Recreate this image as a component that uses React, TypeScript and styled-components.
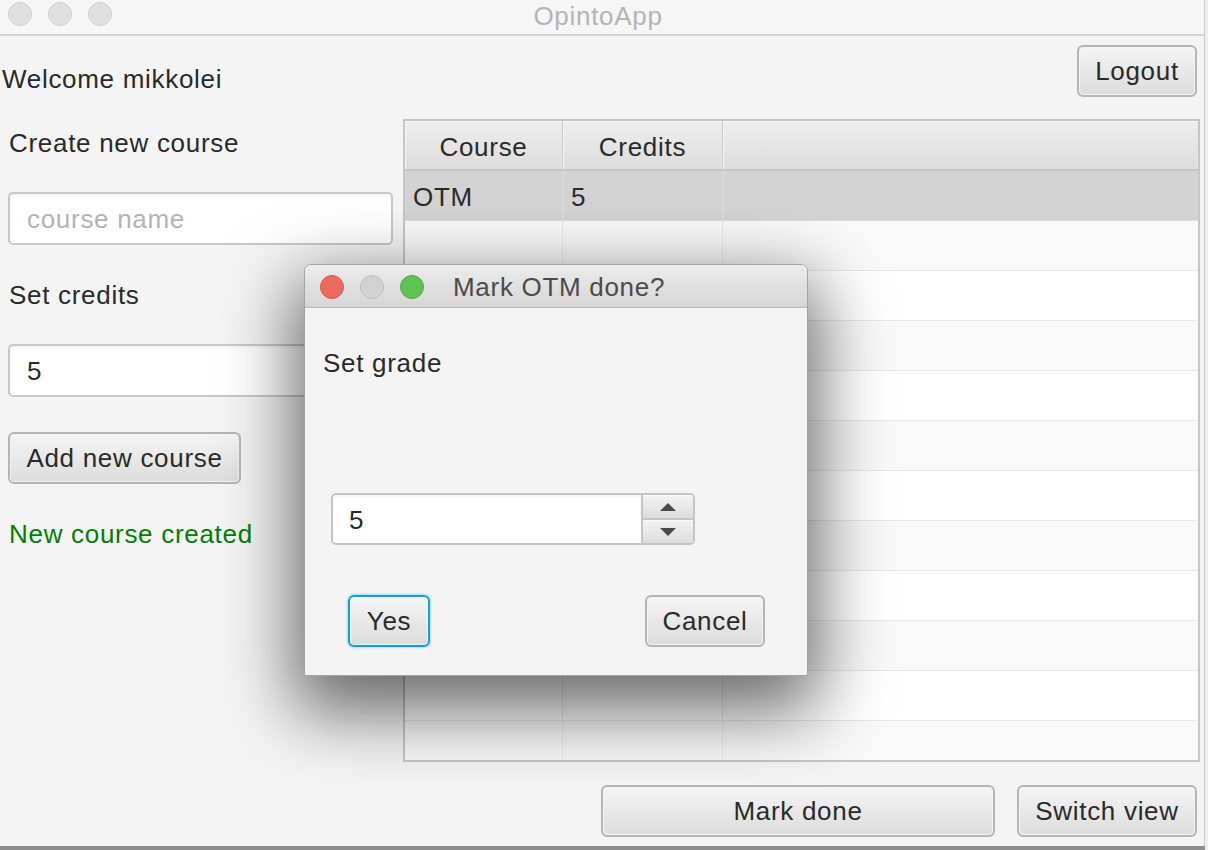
import React from "react";
import styled, { createGlobalStyle } from "styled-components";

const Global = createGlobalStyle`
  html, body { margin: 0; padding: 0; background: #efefef; }
  body { font-family: "Liberation Sans", Arial, sans-serif; }
  #root { width: 1208px; height: 850px; overflow: hidden; }
  * { box-sizing: border-box; }
`;

const Window = styled.div`
  position: relative;
  width: 1205px;
  height: 846px;
  background: #f4f4f4;
  border-right: 1px solid #cbcbcb;
  box-shadow: 0 4px 0 0 #8e8e8e;
  display: flex;
  flex-direction: column;
  font-size: 26px;
  letter-spacing: 0.7px;
  color: #2a2a2a;
`;

const TitleBar = styled.div`
  height: 36px;
  flex: none;
  background: #f6f6f6;
  border-bottom: 2px solid #d6d6d6;
  display: grid;
  grid-template-columns: 1fr auto 1fr;
  align-items: center;
  padding: 0 16px 0 8px;
`;

const Lights = styled.div`
  display: flex;
  gap: 16px;
  align-self: start;
  padding-top: 2px;
`;

const Light = styled.span<{ $c: string; $b: string }>`
  width: 24px;
  height: 24px;
  border-radius: 50%;
  background: ${(p) => p.$c};
  border: 1px solid ${(p) => p.$b};
`;

const WinTitle = styled.div`
  color: #b4b4b4;
  line-height: 30px;
  margin-top: -3px;
`;

const Content = styled.div`
  flex: 1;
  display: flex;
  flex-direction: column;
  padding: 9px 4px 9px 0;
  min-height: 0;
`;

const TopRow = styled.div`
  height: 52px;
  display: flex;
  justify-content: space-between;
  align-items: flex-start;
  padding-right: 3px;
`;

const Welcome = styled.div`
  margin-top: 19px;
  padding-left: 2px;
  line-height: 30px;
`;

const Button = styled.button<{ $w: number; $focus?: boolean }>`
  width: ${(p) => p.$w}px;
  height: 52px;
  flex: none;
  font: inherit;
  letter-spacing: inherit;
  color: #2a2a2a;
  border-radius: 6px;
  border: 2px solid ${(p) => (p.$focus ? "#129ed9" : "#b5b5b5")};
  background: linear-gradient(#f5f5f5, #dcdcdc);
  box-shadow: ${(p) =>
    p.$focus
      ? "0 0 2px 1px #a6dcf3, inset 0 0 0 1px #f4f4f4"
      : "inset 0 0 0 1px #f3f3f3"};
  padding: 1px 0 0;
  display: flex;
  align-items: center;
  justify-content: center;
`;

const MainRow = styled.div`
  margin-top: 22px;
  flex: 1;
  min-height: 0;
  display: flex;
`;

const LeftColumn = styled.div`
  width: 403px;
  flex: none;
  display: flex;
  flex-direction: column;
  align-items: flex-start;
  gap: 34px;
  padding: 9px 0 0 8px;
`;

const Label = styled.div<{ $color?: string }>`
  line-height: 30px;
  padding-left: 1px;
  color: ${(p) => p.$color || "#2a2a2a"};
`;

const Field = styled.input`
  width: 385px;
  height: 53px;
  margin-bottom: 1px;
  border: 2px solid #c8c8c8;
  border-radius: 5px;
  background: #fff;
  box-shadow: inset 0 2px 2px rgba(0, 0, 0, 0.04);
  font: inherit;
  letter-spacing: inherit;
  color: #2a2a2a;
  padding: 2px 0 0 17px;
  outline: none;
  &::placeholder { color: #b3b3b3; }
`;

const LeftButtonWrap = styled.div`
  margin-bottom: 1px;
`;

const Table = styled.div`
  flex: 1;
  border: 2px solid #c6c6c6;
  background: #fff;
  display: flex;
  flex-direction: column;
  overflow: hidden;
`;

const cols = "158px 160px 1fr";

const HeaderRow = styled.div`
  display: grid;
  grid-template-columns: ${cols};
  height: 50px;
  flex: none;
  border-bottom: 2px solid #c6c6c6;
`;

const HeaderCell = styled.div`
  background: linear-gradient(#efefef, #dcdcdc);
  border-right: 1px solid #c6c6c6;
  box-shadow: inset 1px 1px 0 #f7f7f7, inset -1px 0 0 #e8e8e8;
  display: flex;
  align-items: center;
  justify-content: center;
  padding-top: 4px;
  &:last-child { border-right: none; }
`;

const Row = styled.div<{ $bg: string; $line: string }>`
  display: grid;
  grid-template-columns: ${cols};
  height: 50px;
  flex: none;
  background: ${(p) => p.$bg};
  border-bottom: 1px solid ${(p) => p.$line};
`;

const Cell = styled.div<{ $line: string }>`
  border-right: 1px solid ${(p) => p.$line};
  display: flex;
  align-items: center;
  padding: 3px 0 0 8px;
  &:last-child { border-right: none; }
`;

const BottomRow = styled.div`
  margin-top: 23px;
  display: flex;
  justify-content: flex-end;
  gap: 22px;
  padding-right: 3px;
`;

/* Dialog */
const Dialog = styled.div`
  position: absolute;
  left: 304px;
  top: 264px;
  width: 504px;
  height: 412px;
  border: 1px solid #a3a3a3;
  border-radius: 7px 7px 2px 2px;
  background: #f4f4f4;
  box-shadow: 0 26px 70px 10px rgba(0, 0, 0, 0.58);
  display: flex;
  flex-direction: column;
  overflow: hidden;
`;

const DialogBar = styled.div`
  height: 43px;
  flex: none;
  border-bottom: 1px solid #b8b8b8;
  background: linear-gradient(#ececec, #d6d6d6);
  display: flex;
  align-items: center;
  gap: 16px;
  padding: 2px 0 0 15px;
`;

const DialogTitle = styled.div`
  margin-left: 13px;
  color: #4b4b4b;
  line-height: 30px;
`;

const DialogBody = styled.div`
  flex: 1;
  display: flex;
  flex-direction: column;
  padding: 40px 42px 0 17px;
`;

const Spinner = styled.div`
  margin: 115px 0 0 9px;
  width: 364px;
  height: 52px;
  display: flex;
  border: 2px solid #c4c4c4;
  border-radius: 5px;
  overflow: hidden;
  background: #fff;
`;

const SpinnerText = styled.div`
  flex: 1;
  display: flex;
  align-items: center;
  padding: 2px 0 0 16px;
  box-shadow: inset 0 2px 2px rgba(0, 0, 0, 0.04);
`;

const SpinnerButtons = styled.div`
  width: 52px;
  flex: none;
  display: flex;
  flex-direction: column;
  border-left: 2px solid #c4c4c4;
`;

const SpinBtn = styled.div`
  flex: 1;
  display: flex;
  align-items: center;
  justify-content: center;
  background: linear-gradient(#f4f4f4, #dcdcdc);
  box-shadow: inset 0 1px 0 #fafafa;
  &:first-child { border-bottom: 2px solid #c4c4c4; }
`;

const ButtonRow = styled.div`
  margin-top: 50px;
  display: flex;
  justify-content: space-between;
  padding-left: 26px;
`;

const Arrow = ({ up }: { up?: boolean }) => (
  <svg width="18" height="10" viewBox="0 0 18 10">
    <polygon points={up ? "1,9 17,9 9,1" : "1,1 17,1 9,9"} fill="#4a4a4a" />
  </svg>
);

const rows = Array.from({ length: 12 }, (_, i) => i);

export default function App() {
  return (
    <>
      <Global />
      <Window>
        <TitleBar>
          <Lights>
            <Light $c="#e0e0e0" $b="#d0d0d0" />
            <Light $c="#e0e0e0" $b="#d0d0d0" />
            <Light $c="#e0e0e0" $b="#d0d0d0" />
          </Lights>
          <WinTitle>OpintoApp</WinTitle>
          <span />
        </TitleBar>
        <Content>
          <TopRow>
            <Welcome>Welcome mikkolei</Welcome>
            <Button $w={120}>Logout</Button>
          </TopRow>
          <MainRow>
            <LeftColumn>
              <Label>Create new course</Label>
              <Field placeholder="course name" readOnly />
              <Label>Set credits</Label>
              <Field defaultValue="5" readOnly />
              <LeftButtonWrap>
                <Button $w={233}>Add new course</Button>
              </LeftButtonWrap>
              <Label $color="#008000">New course created</Label>
            </LeftColumn>
            <Table>
              <HeaderRow>
                <HeaderCell>Course</HeaderCell>
                <HeaderCell>Credits</HeaderCell>
                <HeaderCell />
              </HeaderRow>
              {rows.map((i) => {
                const selected = i === 0;
                const bg = selected ? "#d3d3d3" : i % 2 === 1 ? "#f9f9f9" : "#ffffff";
                const line = selected ? "#dcdcdc" : "#e8e8e8";
                return (
                  <Row key={i} $bg={bg} $line={line}>
                    <Cell $line={line}>{selected ? "OTM" : ""}</Cell>
                    <Cell $line={line}>{selected ? "5" : ""}</Cell>
                    <Cell $line={line} />
                  </Row>
                );
              })}
            </Table>
          </MainRow>
          <BottomRow>
            <Button $w={394}>Mark done</Button>
            <Button $w={180}>Switch view</Button>
          </BottomRow>
        </Content>

        <Dialog>
          <DialogBar>
            <Light $c="#ed6a5e" $b="#d5574b" />
            <Light $c="#d2d2d2" $b="#c0c0c0" />
            <Light $c="#5fc454" $b="#4ea945" />
            <DialogTitle>Mark OTM done?</DialogTitle>
          </DialogBar>
          <DialogBody>
            <Label>Set grade</Label>
            <Spinner>
              <SpinnerText>5</SpinnerText>
              <SpinnerButtons>
                <SpinBtn>
                  <Arrow up />
                </SpinBtn>
                <SpinBtn>
                  <Arrow />
                </SpinBtn>
              </SpinnerButtons>
            </Spinner>
            <ButtonRow>
              <Button $w={82} $focus>
                Yes
              </Button>
              <Button $w={120}>Cancel</Button>
            </ButtonRow>
          </DialogBody>
        </Dialog>
      </Window>
    </>
  );
}
